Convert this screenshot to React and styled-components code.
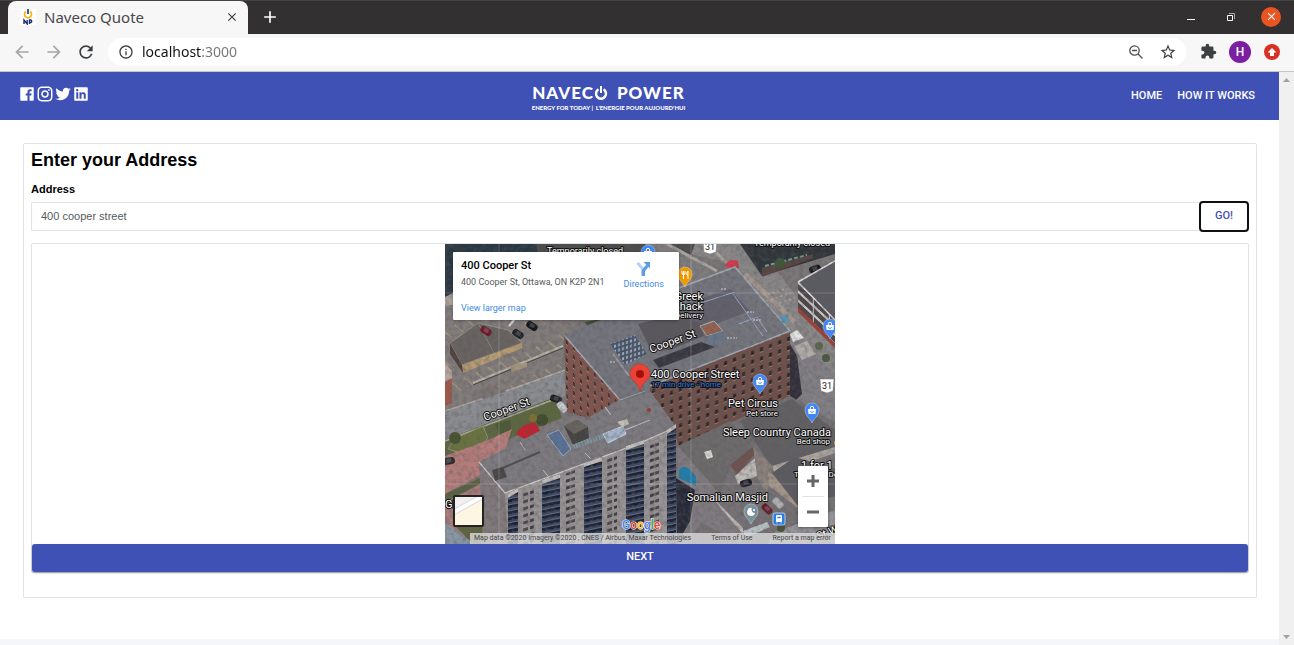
import React from "react";
import styled, { createGlobalStyle, css } from "styled-components";
import {
  MdArrowBack, MdArrowForward, MdRefresh, MdInfoOutline,
  MdStarBorder, MdExtension, MdClose, MdAdd,
} from "react-icons/md";
import { RiFacebookBoxFill, RiInstagramLine, RiTwitterFill, RiLinkedinBoxFill } from "react-icons/ri";

const brand = "#3f51b5";
const line = "#dfe2e8";

const GlobalStyle = createGlobalStyle`
  *, *::before, *::after { box-sizing: border-box; }
  body { margin: 0; background: #fff; font-family: "Liberation Sans", Arial, sans-serif; }
  button { font: inherit; border: 0; padding: 0; background: none; cursor: pointer; }
  a { text-decoration: none; }
  svg { display: block; }
`;

/* ---------- browser frame ---------- */

const Window = styled.div`
  display: flex;
  flex-direction: column;
  min-height: 100vh;
`;

const TabStrip = styled.div`
  display: flex;
  align-items: center;
  height: 34px;
  padding: 0 13px 0 8px;
  background: #323030;
  border-top: 1px solid #454343;
`;

const Tab = styled.div`
  display: flex;
  align-items: center;
  gap: 8px;
  align-self: stretch;
  width: 240px;
  padding: 0 8px 2px 12px;
  border-radius: 8px 8px 0 0;
  background: #f7f7f7;
`;

const TabTitle = styled.span`
  flex: 1;
  font: 15px/20px "Noto Sans", sans-serif;
  color: #45484c;
`;

const IconButton = styled.button`
  display: grid;
  place-items: center;
  width: ${(p) => p.$size || 20}px;
  height: ${(p) => p.$size || 20}px;
  border-radius: 50%;
  color: ${(p) => p.$color || "#3c4043"};
  background: ${(p) => p.$bg || "transparent"};
`;

const NewTab = styled(IconButton)`
  margin: 0 auto 2px 12px;
`;

const WindowControls = styled.div`
  display: flex;
  gap: 20px;
  padding-bottom: 2px;
`;

const Toolbar = styled.div`
  display: flex;
  align-items: center;
  gap: 12px;
  height: 38px;
  padding: 0 12px 2px;
  background: #f7f7f7;
  border-bottom: 1px solid #c3c4c6;
`;

const AddressBar = styled.div`
  flex: 1;
  display: flex;
  align-items: center;
  gap: 8px;
  height: 28px;
  padding: 0 8px 0 10px;
  border-radius: 14px;
  background: #fff;
`;

const UrlInput = styled.input`
  flex: 1;
  min-width: 0;
  padding: 0;
  border: 0;
  outline: 0;
  font: 14px/20px "Noto Sans", sans-serif;
  color: transparent;
  background: linear-gradient(to right, #111 59px, #757575 59px);
  background-clip: text;
  -webkit-background-clip: text;
`;

const ToolGroup = styled.div`
  display: flex;
  align-items: center;
  gap: ${(p) => p.$gap || 12}px;
`;

const Avatar = styled(IconButton)`
  font: 500 12px/22px Roboto, sans-serif;
`;

const Viewport = styled.div`
  flex: 1;
  display: flex;
`;

const ScrollTrack = styled.div`
  display: flex;
  flex-direction: column;
  justify-content: space-between;
  align-items: center;
  width: 15px;
  padding: 6px 0;
  background: #f0f0f0;
`;

const Page = styled.div`
  flex: 1;
  min-width: 0;
  display: flex;
  flex-direction: column;
`;

/* ---------- site ---------- */

const NavBar = styled.header`
  display: flex;
  justify-content: space-between;
  align-items: center;
  height: 48px;
  padding: 0 24px 0 18px;
  background: ${brand};
  color: #fff;
`;

const Socials = styled.div`
  display: flex;
  padding-bottom: 4px;
`;

const SocialLink = styled.a`
  color: #fff;
`;

const Logo = styled.a`
  display: flex;
  flex-direction: column;
  align-items: center;
  padding: 3px 4px 0 0;
  color: #fff;
`;

const LogoName = styled.span`
  display: flex;
  align-items: center;
  font: 900 17px/20px Lato, sans-serif;
  letter-spacing: 1px;
`;

const LogoWord = styled.span`
  margin-left: ${(p) => (p.$spaced ? 8 : 0)}px;
`;

const Tagline = styled.span`
  font: 900 6px/10px Lato, sans-serif;
  white-space: pre;
`;

const NavLinks = styled.nav`
  display: flex;
  gap: 15px;
`;

const materialLabel = css`
  font: 500 11px/20px Roboto, sans-serif;
  text-transform: uppercase;
`;

const NavLink = styled.a`
  ${materialLabel}
  color: #fff;
`;

const Main = styled.main`
  padding: 23px 22px 41px 23px;
  background: #fff;
`;

const Card = styled.section`
  padding: 6px 7px 24px;
  border: 1px solid ${line};
  border-radius: 2px;
`;

const Title = styled.h1`
  margin: 0 0 11px;
  font-size: 18px;
  line-height: 20px;
  color: #000;
`;

const FieldLabel = styled.label`
  display: block;
  margin-bottom: 4px;
  font-size: 11px;
  line-height: 16px;
  font-weight: bold;
  color: #000;
`;

const SearchRow = styled.div`
  display: flex;
  align-items: center;
  margin-bottom: 11px;
`;

const TextInput = styled.input`
  flex: 1;
  min-width: 0;
  height: 29px;
  padding: 0 9px 2px;
  border: 1px solid ${line};
  border-right: 0;
  border-radius: 2px 0 0 2px;
  outline: 0;
  font: 11px/16px "Liberation Sans", Arial, sans-serif;
  color: #55595c;
`;

const GoButton = styled.button`
  ${materialLabel}
  width: 50px;
  height: 31px;
  padding-bottom: 2px;
  border: 2px solid #101010;
  border-radius: 4px;
  color: ${brand};
`;

const ResultBox = styled.div`
  border: 1px solid ${line};
  border-radius: 2px;
`;

const NextButton = styled.button`
  ${materialLabel}
  display: block;
  width: 100%;
  height: 28px;
  padding-bottom: 3px;
  border-radius: 3px;
  color: #fff;
  background: ${brand};
  box-shadow: 0 1px 2px rgba(0, 0, 0, 0.35);
`;

const Footer = styled.footer`
  flex: 1;
  background: #f5f6fa;
`;

/* ---------- map ---------- */

const MapFrame = styled.div`
  position: relative;
  width: 390px;
  height: 300px;
  margin: 0 auto;
  overflow: hidden;
  font-family: Roboto, sans-serif;
`;

const PlaceCard = styled.div`
  position: absolute;
  top: 8px;
  left: 8px;
  display: flex;
  justify-content: space-between;
  width: 226px;
  height: 68px;
  padding: 6px 15px 4px 8px;
  border-radius: 1px;
  background: #fff;
  box-shadow: 0 1px 3px rgba(0, 0, 0, 0.3);
`;

const PlaceText = styled.div`
  display: flex;
  flex-direction: column;
`;

const PlaceName = styled.strong`
  font-size: 11px;
  line-height: 16px;
  font-weight: 500;
  color: #000;
`;

const PlaceAddress = styled.span`
  font-size: 9px;
  line-height: 16px;
  color: #5b5b5b;
`;

const MapLink = styled.a`
  font-size: 9px;
  line-height: 16px;
  color: #3f8ae6;
  margin-top: ${(p) => p.$top || 0}px;
`;

const Directions = styled(MapLink)`
  display: flex;
  flex-direction: column;
  align-items: center;
  padding-top: 3px;
`;

const LayerButton = styled.button`
  position: absolute;
  left: 8px;
  bottom: 17px;
  width: 31px;
  height: 32px;
  border: 2px solid #222;
  border-radius: 2px;
  overflow: hidden;
  background: #fdf6e3;
`;

const ZoomControl = styled.div`
  position: absolute;
  right: 7px;
  bottom: 17px;
  width: 30px;
  border-radius: 1px;
  background: #fff;
  box-shadow: 0 1px 3px rgba(0, 0, 0, 0.4);
`;

const ZoomButton = styled.button`
  display: grid;
  place-items: center;
  width: 22px;
  height: 30px;
  margin: 0 4px;
  & + & { border-top: 1px solid #e2e2e2; height: 31px; }
`;

const Attribution = styled.div`
  position: absolute;
  right: 0;
  bottom: 0;
  display: flex;
  justify-content: space-between;
  width: 365px;
  height: 11px;
  padding: 0 4px;
  background: rgba(222, 222, 222, 0.78);
  font-size: 7px;
  line-height: 11px;
  color: #444;
  white-space: nowrap;
  a { color: #444; }
`;

const MapLabel = styled.text`
  font-family: Roboto, sans-serif;
  font-size: ${(p) => p.$size || 11}px;
  fill: ${(p) => p.$fill || "#fff"};
  stroke: #111;
  stroke-width: 2px;
  stroke-linejoin: round;
  paint-order: stroke;
  text-anchor: ${(p) => p.$anchor || "start"};
`;

const ShieldText = styled.text`
  font: 9px Roboto, sans-serif;
  fill: #222;
  text-anchor: middle;
`;

const GoogleMark = styled.text`
  font: 500 12px Roboto, sans-serif;
  stroke: #fff;
  stroke-width: 1px;
  paint-order: stroke;
`;

function Pin({ x, y, color = "#4285f4", children }) {
  return (
    <g transform={`translate(${x} ${y})`}>
      <path d="M0 12C-2 7-7 5-7-1a7 7 0 0 1 14 0C7 5 2 7 0 12Z" fill={color} stroke="#fff" strokeOpacity=".55" strokeWidth=".6" />
      {children || (
        <>
          <path d="M-4-2h8l-.5 5h-7z" fill="#fff" />
          <path d="M-1.700-2v-1a1.700 1.700 0 0 1 3.400 0v1" fill="none" stroke="#fff" />
          <path d="M-1.500 0a1.500 1.500 0 0 0 3 0" fill="none" stroke={color} strokeWidth=".8" />
        </>
      )}
    </g>
  );
}

function Car({ x, y, color, turn = 25 }) {
  return (
    <g transform={`translate(${x} ${y}) rotate(${turn})`}>
      <rect x="-6" y="-3.500" width="12" height="7" rx="3" fill={color} />
      <rect x="-2.500" y="-2.500" width="5" height="4" rx="1" fill="#fff" opacity=".18" />
    </g>
  );
}

function Shield({ x, y }) {
  return (
    <g transform={`translate(${x} ${y})`}>
      <path d="M-7-7H7l-1 12-6 2-6-2Z" fill="#fff" stroke="#777" strokeWidth=".5" />
      <ShieldText x="0" y="3">31</ShieldText>
    </g>
  );
}

const balconies = [[63, 250, 10], [97, 236, 18], [139, 219, 18], [181, 202, 18], [222, 186, 9]];
const windowColumns = [[78, 247, 11], [120, 230, 10], [162, 213, 10], [204, 198, 10]];

function SatelliteView() {
  return (
    <svg width="390" height="300" viewBox="0 0 390 300" role="img" aria-label="Satellite view of 400 Cooper Street">
      <defs>
        <pattern id="brickRight" width="9" height="9" patternUnits="userSpaceOnUse" patternTransform="translate(195 147) skewY(-21)">
          <rect width="9" height="9" fill="#70504a" />
          <rect x="3" y="3" width="3" height="4" fill="#2b2426" />
          <rect x="3" y="7" width="3" height="1" fill="#9d8078" />
        </pattern>
        <pattern id="brickLeft" width="7" height="9" patternUnits="userSpaceOnUse" patternTransform="translate(119 91) skewY(40)">
          <rect width="7" height="9" fill="#82554d" />
          <rect x="2" y="3" width="2" height="4" fill="#452f32" />
          <rect x="2" y="7" width="2" height="1" fill="#b38e85" />
        </pattern>
        <pattern id="balcony" width="6" height="6" patternUnits="userSpaceOnUse" patternTransform="skewY(-12)">
          <rect width="6" height="6" fill="#1b2030" />
          <rect y="2" width="6" height="2" fill="#3c4764" />
          <rect y="4" width="6" height="1" fill="#666e82" />
          <rect x="1" y="1" width="2" height="1" fill="#2f4467" />
        </pattern>
        <pattern id="flatWindows" width="12" height="7" patternUnits="userSpaceOnUse" patternTransform="skewY(-18)">
          <rect width="12" height="7" fill="#969193" />
          <rect x="1" y="2" width="4" height="3" fill="#3e3a40" />
          <rect x="6" y="2" width="5" height="3" fill="#4a464c" />
        </pattern>
        <pattern id="stalls" width="13" height="26" patternUnits="userSpaceOnUse" patternTransform="rotate(-24)">
          <path d="M2 0 7 10" stroke="#c9ad7c" strokeWidth=".8" />
        </pattern>
        <pattern id="solar" width="4" height="5" patternUnits="userSpaceOnUse" patternTransform="skewY(-18)">
          <rect width="4" height="5" fill="#465368" />
          <rect x="1" y="1" width="2" height="3" fill="#a3b2c4" />
        </pattern>
        <pattern id="deck" width="16" height="9" patternUnits="userSpaceOnUse" patternTransform="translate(353 38) skewY(43)">
          <rect width="16" height="9" fill="#c7c6c6" />
          <rect y="2" width="15" height="6" fill="#4d4648" />
        </pattern>
        <filter id="grain" x="0" y="0" width="100%" height="100%">
          <feTurbulence type="fractalNoise" baseFrequency=".22" numOctaves="4" seed="8" />
          <feColorMatrix values="0 0 0 0 .1  0 0 0 0 .1  0 0 0 0 .1  1.8 1.2 0 0 -1.25" />
        </filter>
      </defs>

      <rect width="390" height="300" fill="#7b7678" />

      {/* north-west office block and parking lot */}
      <path d="M0 0H92V8H8V50L0 53Z" fill="#2b3842" />
      <path d="M0 53 8 49V62L0 66Z" fill="#aaa39c" />
      <path d="M0 62 50 55 150 60 120 92 116 130 0 175Z" fill="#827c7b" />
      <path d="M0 62 150 60 120 92 116 130 0 175Z" fill="url(#stalls)" />
      <path d="M140 78 160 74 155 80 143 83Z" fill="#3e4c33" />
      <path d="M5 99 33 79 63 86 77 99 17 121Z" fill="#696361" stroke="#a29a8f" strokeWidth=".8" />
      <path d="M17 121 77 99V104L18 129Z" fill="#b59b72" />
      <path d="M33 79 49 109" stroke="#a29a8f" strokeWidth=".6" />
      <path d="M5 99 17 121 18 129 5 110Z" fill="#50423c" />
      <path d="M0 119 7 127V159L0 162Z" fill="#9d5a4a" />
      <path d="M0 119 7 127V134L0 138Z" fill="#b9a8a1" />
      <path d="M28 139 118 102" stroke="#b9b4a8" strokeWidth="2" />
      <path d="M28 141 118 104" stroke="#494443" strokeWidth="1" />
      <path d="M66 122 82 118V123L66 128Z" fill="#a5977c" />
      <path d="M64 82 69 76" stroke="#ddd" strokeWidth="2" />
      <Car x={41} y={87} color="#6c1a2b" turn={35} />
      <Car x={73} y={90} color="#1c1e26" turn={35} />
      <Car x={87} y={82} color="#15161c" turn={35} />

      {/* west stretch of Cooper St */}
      <path d="M0 168 67 146 120 127V152L0 197Z" fill="#8b8c91" />
      <path d="M0 167 67 145 120 126" stroke="#b3afa9" strokeWidth="1.500" fill="none" />
      <path d="M25 152 45 140 62 147 40 155Z" fill="#7c7574" />

      {/* lawn, plaza and red canopy */}
      <path d="M0 196 110 153 117 174 68 193 37 216 0 214Z" fill="#5d673f" />
      <path d="M0 197 110 155" stroke="#b0aaa4" strokeWidth="1.500" />
      <path d="M3 205Q8 194 20 190L38 182 43 194 32 208H12Z" fill="#69733f" stroke="#a59a89" strokeWidth=".8" />
      <path d="M50 180 65 176 67 190 56 195Z" fill="#4c5a36" />
      <path d="M0 212 43 196 67 185 60 206 37 216 35 231 0 250Z" fill="#b47c7b" />
      <path d="M0 250 35 234V240L0 258Z" fill="#5a6141" />
      <path d="M0 258 36 240 38 300H0Z" fill="#a97b79" />
      <path d="M0 278 30 300H0Z" fill="#8895a3" />
      <path d="M10 282 38 280V300H28Z" fill="#5f6541" />
      <path d="M71 190Q76 180 90 178L97 190 81 196Z" fill="#c02230" />
      <circle cx="10" cy="194" r="6" fill="#46532f" />
      <circle cx="97" cy="176" r="6" fill="#3f4c2b" />
      <circle cx="88" cy="174" r="4" fill="#7c7038" />
      <Car x={4} y={217} color="#2e282c" turn={-10} />
      <Car x={111} y={155} color="#191b22" turn={20} />
      <Car x={117} y={163} color="#c1c2c5" turn={50} />

      {/* north streets */}
      <path d="M200 0H310L390 100V200L345 120 290 20Z" fill="#8a8788" />
      <path d="M92 0H250L234 45V8H92Z" fill="#4a4b4a" />
      <path d="M200 0H225L272 28 234 44Z" fill="#7f7c7d" />
      <path d="M222 0 272 27M264 0 352 98" stroke="#a8a29e" strokeWidth="3" />
      <path d="M300 30 350 78" stroke="#a4978e" strokeWidth="5" />
      <path d="M295 0H390V10L317 32Z" fill="#30353a" />
      <path d="M317 24 368 10V14L317 33Z" fill="#574440" />
      <path d="M320 22 362 11" stroke="#6da195" strokeWidth="2" strokeDasharray="4 2" />
      <circle cx="335" cy="19" r="5" fill="#3f5637" />
      <path d="M280 21Q284 14 293 17L294 24 284 25Z" fill="#d03b4d" />
      <path d="M318 52 343 44M321 57 346 49M325 62 350 54" stroke="#b1a19a" strokeWidth="1.500" strokeDasharray="2 3" />
      <Car x={370} y={25} color="#17191f" turn={-20} />

      {/* parking deck on the east side */}
      <path d="M353 38 390 17V80Z" fill="#5b5b62" />
      <path d="M353 38 390 76V100L353 64Z" fill="url(#deck)" />
      <path d="M353 38 390 17M353 38 390 76" stroke="#dcdcdc" strokeWidth="1.500" />
      <path d="M353 63 390 99V104L353 68Z" fill="#a13e36" />
      <path d="M345 88 390 130V180L345 150Z" fill="#828085" />
      <path d="M345 100 352 112 357 150 345 162Z" fill="#332f3b" />
      <path d="M345 90 352 86 359 94 348 98Z" fill="#e3e3e4" />
      <path d="M349 102 362 97 371 110 357 116Z" fill="#b1adaa" />
      <circle cx="374" cy="102" r="4" fill="#59664d" />
      <circle cx="381" cy="114" r="4" fill="#4b5942" />

      {/* 400 Cooper: brick block */}
      <path d="M119 91 175 155 143 174 122 168Z" fill="url(#brickLeft)" />
      <path d="M200 144 345 87V153L233 202 229 183 205 148Z" fill="url(#brickRight)" />
      <path d="M119 91 165 72 234 44 290 23 345 87 205 142 205 149 175 157Z" fill="#75757e" />
      <path d="M205 142 345 87 290 23 234 44M119 91 175 156" fill="none" stroke="#a4a8b2" strokeWidth="1.500" />
      <path d="M175 156 200 147" stroke="#a4a8b2" />
      <path d="M234 62 285 45 305 67 260 84 234 78Z" fill="#62616b" />
      <path d="M234 66 290 48M288 50 318 92M294 80 312 73 322 88" stroke="#98a6cd" strokeWidth="1" fill="none" />
      <path d="M193 80 234 70 256 80 259 92 225 106 206 106Z" fill="#5a575e" />
      <path d="M165 100 190 91 202 110 180 121Z" fill="url(#solar)" />
      <path d="M255 82 269 77 278 87 262 92Z" fill="#94624f" stroke="#aeb7c2" />
      <path d="M262 92 278 87V96L264 101Z" fill="#66778e" />
      <path d="M208 116 256 98 270 103 214 124Z" fill="#393740" />
      <path d="M276 45h5M302 68h7M308 76h8M282 94h10M165 118h6" stroke="#ddd" strokeWidth="1" strokeDasharray="2 1" />
      <path d="M168 110 184 132" stroke="#9a9aa0" strokeWidth="2" />
      <path d="M335 72 343 70V79L337 79Z" fill="#5a95b5" />

      {/* shops to the south-east */}
      <path d="M233 202 300 172 345 152 390 178V300H231Z" fill="#757174" />
      <path d="M295 177 347 155 390 186V203L327 222Z" fill="#626063" />
      <path d="M233 202 285 177 309 203 285 222 275 250Z" fill="#6e6b6d" />
      <path d="M285 221 308 203 310 210 292 231Z" fill="#6e5350" />
      <path d="M290 232 310 214 312 232 293 240Z" fill="#bdb9b7" />
      <path d="M308 203 327 222 322 251 313 235Z" fill="#8b817d" />
      <path d="M327 222 390 203V209L330 230Z" fill="#aaa59f" />
      <path d="M323 228 353 241V264L324 242Z" fill="#a39588" />
      <path d="M327 229 350 213 390 225V252L353 262Z" fill="#5b5b61" />
      <path d="M233 202 275 250 300 285 296 300 256 278 245 300H231Z" fill="#807b80" />
      <path d="M231 234 250 246 245 277 232 300Z" fill="#272938" />
      <path d="M268 254 300 290 322 278 315 263 292 250Z" fill="#777277" />
      <path d="M268 254 298 284V290L274 262Z" fill="#bbb7b2" />
      <path d="M298 287 322 278 325 283 300 294Z" fill="#b7c1c5" />
      <path d="M234 226Q238 220 244 225L251 232V242L234 234Z" fill="#1e7fae" />
      <path d="M259 208 266 206 268 213 262 215Z" fill="#e4e2de" />
      <path d="M330 288 390 266V300H322Z" fill="#96959a" />
      <Car x={301} y={239} color="#1b1c25" turn={-15} />
      <Car x={322} y={265} color="#611c2a" turn={45} />
      <Car x={333} y={259} color="#aaaaae" turn={45} />
      <circle cx="336" cy="284" r="4" fill="#46543a" />

      {/* residential tower */}
      <path d="M34 218 116 176 143 174 175 158 206 148 231 183 195 199 60 249Z" fill="#7e7b80" />
      <path d="M34 219 60 249 64 300H38Z" fill="#81797b" />
      <path d="M60 249 195 199 231 183V300H63Z" fill="#989395" />
      <path d="M34 218 60 249 195 199 231 183" fill="none" stroke="#d0cecf" strokeWidth="1.200" />
      <path d="M75 198 80 206M98 226 106 236M140 209 146 215M160 163 166 171M180 186 205 176" stroke="#c6c5ca" />
      <path d="M53 226 95 208" stroke="#4e4a4d" strokeWidth="2" />
      <path d="M47 226 58 223 62 233 50 237Z" fill="#494648" />
      <path d="M102 191 114 186 126 205 118 212Z" fill="#597298" stroke="#9fb2cc" />
      <path d="M119 182 132 176 143 183 144 194 128 201Z" fill="#454341" />
      <path d="M119 182 132 176 143 183 129 190Z" fill="#69645e" />
      <path d="M128 203 158 192" stroke="#7d95a0" strokeWidth="5" strokeDasharray="2 1" />
      <path d="M158 190 178 182 181 190 163 199Z" fill="#a4b4cd" stroke="#c9d3e2" />
      <path d="M172 178 182 175 184 180 177 183Z" fill="#c5c1b5" />
      <circle cx="204" cy="166" r="2" fill="#983835" />
      {balconies.map(([x, y, w]) => (
        <g key={x}>
          <path d={`M${x} ${y} l${w} -6 V300 H${x} Z`} fill="url(#balcony)" />
          <path d={`M${x} ${y} l${w} -6 v4 l${-w} 6 Z`} fill="#c3beb8" />
        </g>
      ))}
      {windowColumns.map(([x, y, w]) => (
        <path key={x} d={`M${x} ${y} l${w} -4 V300 H${x} Z`} fill="url(#flatWindows)" />
      ))}

      <rect width="390" height="300" filter="url(#grain)" opacity=".42" />
      <path d="M54 0V300M246 0V300M0 49H390M0 240H390" stroke="#fff" strokeOpacity=".18" />

      {/* places */}
      <MapLabel x="102" y="10" $size={9}>Temporarily closed</MapLabel>
      <MapLabel x="309" y="2" $size={9}>Temporarily closed</MapLabel>
      <Pin x={203} y={9} />
      <Shield x={265} y={3} />
      <Shield x={382} y={142} />
      <Pin x={240} y={31} color="#f29900">
        <path d="M-3-4v3q2 2 3 0v-3M-1.500-4v8M3-4v8M3-4q-2 2-1 4h1" fill="none" stroke="#fff" />
      </Pin>
      <MapLabel x="258" y="56" $size={11} $anchor="end">Greek</MapLabel>
      <MapLabel x="258" y="66" $size={11} $anchor="end">Shack</MapLabel>
      <MapLabel x="258" y="74" $size={8} $anchor="end">Delivery</MapLabel>
      <MapLabel transform="translate(206 109) rotate(-20)">Cooper St</MapLabel>
      <MapLabel transform="translate(40 177) rotate(-20)">Cooper St</MapLabel>
      <MapLabel x="206" y="134">400 Cooper Street</MapLabel>
      <MapLabel x="206" y="143" $size={8} $fill="#2f7be5">17 min drive - home</MapLabel>
      <Pin x={385} y={83} />
      <Pin x={315} y={138} />
      <Pin x={367} y={167} />
      <MapLabel x="333" y="163" $anchor="end">Pet Circus</MapLabel>
      <MapLabel x="333" y="172" $size={8} $anchor="end">Pet store</MapLabel>
      <MapLabel x="386" y="192" $anchor="end">Sleep Country Canada</MapLabel>
      <MapLabel x="385" y="200" $size={8} $anchor="end">Bed shop</MapLabel>
      <circle cx="392" cy="199" r="3" fill="#f29900" />
      <MapLabel x="356" y="225">1 for 1 Pizza</MapLabel>
      <MapLabel x="349" y="233" $size={8}>Takeout · Delivery</MapLabel>
      <MapLabel x="323" y="257" $anchor="end">Somalian Masjid</MapLabel>
      <MapLabel x="0" y="264">Gi</MapLabel>
      <MapLabel transform="translate(373 296) rotate(-20)">St W</MapLabel>
      <Pin x={306} y={268} color="#78909c">
        <path d="M1-4a4 4 0 1 0 3 5A3.300 3.300 0 0 1 1-4Z" fill="#fff" />
        <circle cx="3" cy="-2" r="1" fill="#fff" />
      </Pin>
      <g transform="translate(328 269)">
        <rect width="12" height="12" rx="2" fill="#2b7de9" stroke="#fff" strokeWidth=".6" />
        <rect x="3" y="2" width="6" height="7" rx="1" fill="#fff" />
        <path d="M4 3.500h4v2H4zM4 9v1.500M8 9v1.500" fill="#2b7de9" stroke="#fff" strokeWidth=".6" />
      </g>
      <path d="M195 148C194 138 185 136 185 130a10 10 0 0 1 20 0C205 136 196 138 195 148Z" fill="#ea4335" stroke="#c5362a" strokeWidth=".6" />
      <circle cx="195" cy="130" r="4" fill="#a50e0e" />
      <GoogleMark x="177" y="285">
        <tspan fill="#4285f4">G</tspan><tspan fill="#ea4335">o</tspan><tspan fill="#fbbc05">o</tspan>
        <tspan fill="#4285f4">g</tspan><tspan fill="#34a853">l</tspan><tspan fill="#ea4335">e</tspan>
      </GoogleMark>
    </svg>
  );
}

function Favicon() {
  return (
    <svg width="16" height="16" viewBox="0 0 16 16" aria-hidden="true">
      <rect width="16" height="16" fill="#fff" />
      <path d="M6 2.500a3.500 3.500 0 1 0 4 0" fill="none" stroke="#f5b81c" strokeWidth="1.800" />
      <path d="M8 0v5" stroke="#1d2f6f" strokeWidth="1.600" />
      <path d="M4 15v-4l3.200 4v-4M9.500 15v-4h1.500q1.500 1.300 0 2.500H9.500" fill="none" stroke="#1d2f6f" strokeWidth="1.400" />
    </svg>
  );
}

function PowerO() {
  return (
    <svg width="15" height="16" viewBox="0 0 15 16" aria-hidden="true">
      <path d="M4.500 4.300a5 5 0 1 0 5 0" fill="none" stroke="#fff" strokeWidth="2.500" />
      <path d="M7 1v7" stroke="#fff" strokeWidth="2" />
    </svg>
  );
}

function Triangle({ down }) {
  return (
    <svg width="7" height="4" viewBox="0 0 7 4" aria-hidden="true">
      <path d={down ? "M0 0h7L3.500 4Z" : "M0 4h7L3.500 0Z"} fill="#a0a0a0" />
    </svg>
  );
}

const socials = [
  ["Facebook", RiFacebookBoxFill],
  ["Instagram", RiInstagramLine],
  ["Twitter", RiTwitterFill],
  ["LinkedIn", RiLinkedinBoxFill],
];

export default function App() {
  return (
    <Window>
      <GlobalStyle />
      <TabStrip>
        <Tab>
          <Favicon />
          <TabTitle>Naveco Quote</TabTitle>
          <IconButton $size={16} aria-label="Close tab"><MdClose size={14} /></IconButton>
        </Tab>
        <NewTab $color="#fff" aria-label="New tab"><MdAdd size={20} /></NewTab>
        <WindowControls>
          <IconButton $color="#fff" aria-label="Minimize">
            <svg width="8" height="8"><path d="M0 6.500h8" stroke="#fff" /></svg>
          </IconButton>
          <IconButton $color="#fff" aria-label="Restore">
            <svg width="8" height="8">
              <path d="M2 .5h5.500V6" fill="none" stroke="#aaa" />
              <path d="M.5 2.500h5v5h-5z" fill="none" stroke="#fff" />
            </svg>
          </IconButton>
          <IconButton $color="#fff" $bg="#e95420" aria-label="Close window"><MdClose size={13} /></IconButton>
        </WindowControls>
      </TabStrip>

      <Toolbar>
        <IconButton $color="#a5a7a9" aria-label="Back"><MdArrowBack size={20} /></IconButton>
        <IconButton $color="#a5a7a9" aria-label="Forward"><MdArrowForward size={20} /></IconButton>
        <IconButton aria-label="Reload"><MdRefresh size={20} /></IconButton>
        <AddressBar>
          <IconButton $size={16} aria-label="Site information"><MdInfoOutline size={16} /></IconButton>
          <UrlInput aria-label="Address bar" defaultValue="localhost:3000" />
          <ToolGroup>
            <IconButton aria-label="Zoom">
              <svg width="14" height="14" viewBox="0 0 14 14" fill="none" stroke="#4a4d50" strokeWidth="1.300">
                <circle cx="5.500" cy="5.500" r="4.700" />
                <path d="M9 9l4.500 4.500M3 5.500h5" />
              </svg>
            </IconButton>
            <IconButton aria-label="Bookmark this page"><MdStarBorder size={18} /></IconButton>
          </ToolGroup>
        </AddressBar>
        <ToolGroup $gap={11}>
          <IconButton aria-label="Extensions"><MdExtension size={17} /></IconButton>
          <Avatar $size={22} $bg="#7b1fa2" $color="#fff" aria-label="Profile">H</Avatar>
          <IconButton aria-label="Update">
            <svg width="16" height="16" viewBox="0 0 16 16">
              <circle cx="8" cy="8" r="8" fill="#d93025" />
              <path d="M8 4l4.500 4.500H10V12H6V8.500H3.500Z" fill="#fff" />
            </svg>
          </IconButton>
        </ToolGroup>
      </Toolbar>

      <Viewport>
        <Page>
          <NavBar>
            <Socials>
              {socials.map(([name, Icon]) => (
                <SocialLink key={name} href="#" aria-label={name}><Icon size={18} /></SocialLink>
              ))}
            </Socials>
            <Logo href="#">
              <LogoName>
                <LogoWord>NAVEC</LogoWord>
                <PowerO />
                <LogoWord $spaced>POWER</LogoWord>
              </LogoName>
              <Tagline>ENERGY FOR TODAY |  L'ENERGIE POUR AUJOURD'HUI</Tagline>
            </Logo>
            <NavLinks>
              <NavLink href="#">Home</NavLink>
              <NavLink href="#">How it works</NavLink>
            </NavLinks>
          </NavBar>

          <Main>
            <Card>
              <Title>Enter your Address</Title>
              <FieldLabel htmlFor="address">Address</FieldLabel>
              <SearchRow>
                <TextInput id="address" type="text" defaultValue="400 cooper street" />
                <GoButton type="button">Go!</GoButton>
              </SearchRow>
              <ResultBox>
                <MapFrame>
                  <SatelliteView />
                  <PlaceCard>
                    <PlaceText>
                      <PlaceName>400 Cooper St</PlaceName>
                      <PlaceAddress>400 Cooper St, Ottawa, ON K2P 2N1</PlaceAddress>
                      <MapLink href="#" $top={10}>View larger map</MapLink>
                    </PlaceText>
                    <Directions href="#">
                      <svg width="15" height="15" viewBox="0 0 15 15" aria-hidden="true">
                        <path d="M1.500 2 6.500 7.500V15" fill="none" stroke="#b4d2f6" strokeWidth="3" />
                        <path d="M7.500 15V9.500L11.500 4.500" fill="none" stroke="#5c9be8" strokeWidth="3" />
                        <path d="M7.500 1h6.500v6.500Z" fill="#5c9be8" />
                      </svg>
                      Directions
                    </Directions>
                  </PlaceCard>
                  <LayerButton aria-label="Show street map">
                    <svg width="27" height="28" viewBox="0 0 27 28">
                      <path d="M0 0h27L0 15Z" fill="#f0f0ee" />
                      <path d="M-1 15 28-1" stroke="#dcdce0" strokeWidth="6" />
                      <path d="M-1 15 28-1" stroke="#fff" strokeWidth="4" />
                    </svg>
                  </LayerButton>
                  <ZoomControl>
                    <ZoomButton aria-label="Zoom in">
                      <svg width="14" height="14"><path d="M7 1v12M1 7h12" stroke="#666" strokeWidth="3" /></svg>
                    </ZoomButton>
                    <ZoomButton aria-label="Zoom out">
                      <svg width="14" height="14"><path d="M1 7h12" stroke="#666" strokeWidth="3" /></svg>
                    </ZoomButton>
                  </ZoomControl>
                  <Attribution>
                    <span>Map data ©2020 Imagery ©2020 , CNES / Airbus, Maxar Technologies</span>
                    <a href="#">Terms of Use</a>
                    <a href="#">Report a map error</a>
                  </Attribution>
                </MapFrame>
                <NextButton type="button">Next</NextButton>
              </ResultBox>
            </Card>
          </Main>
          <Footer />
        </Page>
        <ScrollTrack aria-hidden="true">
          <Triangle />
          <Triangle down />
        </ScrollTrack>
      </Viewport>
    </Window>
  );
}
